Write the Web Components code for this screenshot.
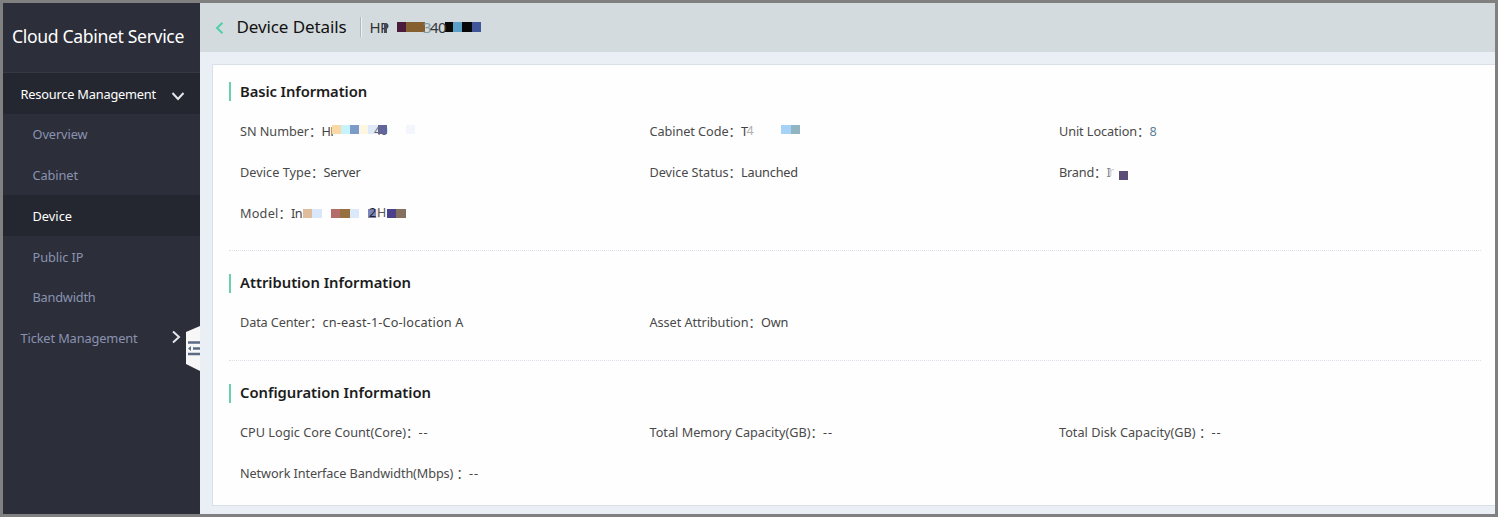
<!DOCTYPE html>
<html lang="en">
<head>
<meta charset="utf-8">
<title>Device Details</title>
<style>
html,body{margin:0;height:100%;overflow:hidden}
body{font-family:"Noto Sans","Noto Sans CJK SC",sans-serif;background:#808080}
</style>
</head>
<body>
<app-shell>
  <side-nav slot="nav"></side-nav>
  <page-header slot="header"></page-header>
  <info-card>
    <info-section class="first" heading="Basic Information" w="127">
      <info-field label="SN Number" w="69" value="HP" blocks="92,-6,9,#fad9a6;101,-6,9,#c8f3fd;110,-6,9,#7b9cc8;119,-6,9,#fdf6e3;128,-6,10,#dfeaf8;138,-6,9,#6265aa;166,-6,9,#f3f7fd" ghosts="134,40,#65657a"></info-field>
      <info-field label="Cabinet Code" w="79" value="T" vw="7" blocks="131,-6,10,#a5d3f7;141,-6,9,#90b4c0" ghosts="97,4,#b0b0b0"></info-field>
      <info-field label="Unit Location" w="78" value="8" vw="8" tint="#5c8094"></info-field>
      <info-field label="Device Type" w="71" value="Server" vw="37"></info-field>
      <info-field label="Device Status" w="79" value="Launched" vw="57"></info-field>
      <info-field label="Brand" w="35" value="I" vw="4" tint="#888" blocks="60,-1,9,#5a4e78" ghosts="50,r,#cccccc"></info-field>
      <info-field label="Model" w="38.500" value="In" vw="11" blocks="63,-4,9,#dfbd9c;72,-4,10,#d8e8fa;91,-4,9,#b46e6a;100,-4,10,#96703f;110,-4,9,#dce9fa;128,-4,8,#7a86b8;136,-4,4,#f7e9e2;147,-4,9,#4c3f8c;156,-4,10,#857060" ghosts="129,2,#222233;137,H,#555555"></info-field>
    </info-section>
    <info-section heading="Attribution Information" w="171">
      <info-field label="Data Center" w="70" value="cn-east-1-Co-location A" vw="141"></info-field>
      <info-field label="Asset Attribution" w="99" value="Own" vw="27"></info-field>
    </info-section>
    <info-section heading="Configuration Information" w="191">
      <info-field label="CPU Logic Core Count(Core)" w="166" value="--" vw="10"></info-field>
      <info-field label="Total Memory Capacity(GB)" w="161" value="--" vw="10"></info-field>
      <info-field label="Total Disk Capacity(GB) " w="140" value="--" vw="10"></info-field>
      <info-field label="Network Interface Bandwidth(Mbps) " w="216.500" value="--" vw="10"></info-field>
    </info-section>
  </info-card>
</app-shell>
<script>
class Base extends HTMLElement{
  mount(html){ this.attachShadow({mode:'open'}).innerHTML = html; }
}
/* One line of text, tracked so that it fills the width given in w. */
customElements.define('fit-text', class extends Base{
  connectedCallback(){
    if(this.shadowRoot) return;
    this.mount('<style>:host{display:inline-block;white-space:pre;flex:none}</style><span><slot></slot></span>');
    const w = parseFloat(this.getAttribute('w'));
    const n = this.textContent.length;
    if(!w || !n) return;
    const now = this.shadowRoot.querySelector('span').getBoundingClientRect().width;
    this.style.letterSpacing = ((w - now) / n) + 'px';
  }
});
customElements.define('app-shell', class extends Base{
  connectedCallback(){ this.mount(`<style>
    :host{display:grid;grid-template-columns:197px 1fr;grid-template-rows:49px 1fr;height:100vh;box-sizing:border-box;border:3px solid #808080;background:#e9eff4}
    ::slotted([slot=nav]){grid-row:1/3}
    main{padding:12px 0 8px 12px;display:flex;min-height:0}
    </style><slot name="nav"></slot><slot name="header"></slot><main><slot></slot></main>`); }
});
customElements.define('nav-item', class extends Base{
  connectedCallback(){
    const a = this.getAttribute('arrow');
    const d = a==='down' ? 'M1.5 4 L7 10 L12.500 4' : 'M4 1.500 L10 7 L4 12.500';
    this.mount(`<style>
    :host{display:flex;align-items:center;justify-content:space-between;flex:0 0 40.75px;padding:.6px 15px 0 29.5px;box-sizing:border-box;font-size:12.8px;color:#8993b0}
    :host([top]){padding-left:17.5px}
    :host([on]){background:#252730;color:#fff}
    svg{display:block;position:relative;top:${a==='down'?2:-1}px;left:${a==='down'?0:-2}px}
    </style><fit-text w="${this.getAttribute('w')}">${this.getAttribute('label')}</fit-text>
    ${a?`<svg width="14" height="14" viewBox="0 0 14 14" fill="none" stroke="#e4e6ea" stroke-width="2"><path d="${d}"/></svg>`:''}`);
  }
});
customElements.define('side-nav', class extends Base{
  connectedCallback(){ this.mount(`<style>
    :host{display:flex;flex-direction:column;background:#2c2e3a;position:relative}
    header{flex:0 0 70px;box-sizing:border-box;padding:0 0 3px 9px;border-bottom:1px solid #363945;display:flex;align-items:center;font-size:17.6px;color:#fff}
    .fold{position:absolute;left:183px;top:323px}
    </style><header><fit-text w="172">Cloud Cabinet Service</fit-text></header>
    <nav-item top on label="Resource Management" w="135.5" arrow="down"></nav-item>
    <nav-item label="Overview" w="55"></nav-item>
    <nav-item label="Cabinet" w="45.5"></nav-item>
    <nav-item on label="Device" w="39.5"></nav-item>
    <nav-item label="Public IP" w="51"></nav-item>
    <nav-item label="Bandwidth" w="63"></nav-item>
    <nav-item top label="Ticket Management" w="117" arrow="right"></nav-item>
    <svg class="fold" width="14" height="45" viewBox="0 0 14 45"><path d="M0 6 L14 0 V45 L0 38 Z" fill="#f7f7f7"/><path d="M2 16.500H14M7 22.500H14M2 28H14" stroke="#5b6b84" stroke-width="2.500"/><path d="M2 22.500 L5 20 V25 Z" fill="#5b6b84"/></svg>`); }
});
customElements.define('page-header', class extends Base{
  connectedCallback(){ this.mount(`<style>
    :host{display:flex;align-items:center;background:#d4dbde;padding:0 0 1px 15px;color:#111;font-size:17px;position:relative}
    .back{margin:2px 12.5px 0 0}
    fit-text{margin-top:-1px}
    i{width:1px;height:20px;background:#b2b9bc;border-right:1px solid #eef1f2;margin:0 8px 0 13px}
    .id{font-size:15px;color:#333}
    pixel-row{position:absolute;left:0;top:0}
    </style>
    <svg class="back" width="9" height="12" viewBox="0 0 9 12" fill="none" stroke="#50cfa8" stroke-width="2"><path d="M7.500 .8 L2 6 L7.500 11.200"/></svg>
    <fit-text w="110">Device Details</fit-text><i></i><fit-text class="id" w="19">HP</fit-text>
    <pixel-row mid="24" size="15" blocks="184,-4,3,#4a4a52;197,-5,9,#4c1a3a;206,-5,19,#85602e;245,-5,8,#0b0908;253,-5,9,#5aa0c8;262,-5,10,#090808;272,-5,9,#40569a" ghosts="223,3,#7c9ca8;230,40,#34383a"></pixel-row>`); }
});
/* Masked characters: coloured blocks with the leftover glyphs over them. */
customElements.define('pixel-row', class extends Base{
  connectedCallback(){
    const mid = +this.getAttribute('mid'), size = this.getAttribute('size');
    const split = k => (this.getAttribute(k)||'').split(';').filter(Boolean).map(s=>s.split(','));
    this.mount(`<style>:host{display:block}b,span{position:absolute;display:block}span{font-size:${size}px;line-height:20px;letter-spacing:-.6px}</style>`+
      split('blocks').map(([x,y,w,c])=>`<b style="left:${x}px;top:${mid+ +y}px;width:${w}px;height:${size>14?10:9}px;background:${c}"></b>`).join('')+
      split('ghosts').map(([x,t,c])=>`<span style="left:${x}px;top:${mid-10}px;color:${c}">${t}</span>`).join(''));
  }
});
customElements.define('info-card', class extends Base{
  connectedCallback(){ this.mount(`<style>
    :host{display:flex;flex-direction:column;flex:1;background:#fefefe;border:1px solid #d9e0ea;border-right:0;padding:17px 14px 0 16px;box-sizing:border-box}
    </style><slot></slot>`); }
});
customElements.define('info-section', class extends Base{
  connectedCallback(){ this.mount(`<style>
    :host{display:block;padding-bottom:17px;border-bottom:1px dotted #dce1e9;margin-bottom:23px}
    :host(:last-child){border:0;margin:0}
    h2{margin:0;height:19px;border-left:2px solid #6acfb1;padding-left:9px;display:flex;align-items:center;font-size:14.8px;font-weight:600;color:#1c1c1c}
    h2 fit-text{margin-top:-3px}
    :host(.first) h2 fit-text{margin-top:-1px}
    .grid{display:grid;grid-template-columns:409.5px 409.5px 409px;grid-auto-rows:41px;padding:9px 0 0 11px}
    :host(.first){padding-bottom:16px}
    :host(.first) .grid{padding-top:10px}
    </style><h2><fit-text w="${this.getAttribute('w')}">${this.getAttribute('heading')}</fit-text></h2><div class="grid"><slot></slot></div>`); }
});
customElements.define('info-field', class extends Base{
  connectedCallback(){
    const g = k => this.getAttribute(k)||'';
    this.mount(`<style>
    :host{display:flex;align-items:center;position:relative;font-size:12.7px;color:#4a4a4a;padding-bottom:2px}
    .c{width:12.500px;font-family:"Noto Sans CJK SC",sans-serif;line-height:18px}
    .v{color:${g('tint')||'#444'}}
    pixel-row{position:absolute;left:0;top:0}
    </style><fit-text w="${g('w')}">${g('label')}</fit-text><span class="c">：</span><fit-text class="v" w="${g('vw')||16}">${g('value')}</fit-text>
    ${g('blocks')?`<pixel-row mid="20" size="12.5" blocks="${g('blocks')}" ghosts="${g('ghosts')}"></pixel-row>`:''}`);
  }
});
</script>
</body>
</html>
